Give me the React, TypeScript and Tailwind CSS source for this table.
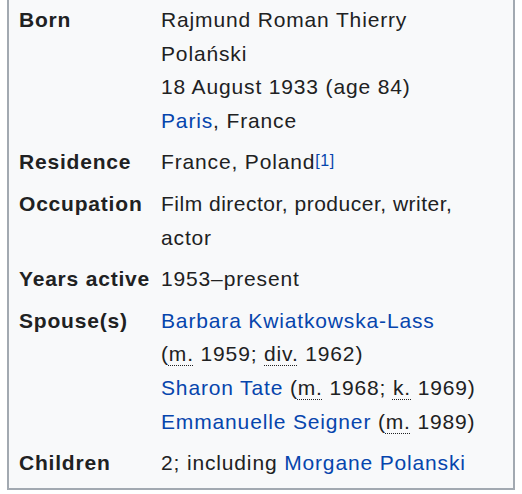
import React from "react";

const Link = ({ children }: { children: React.ReactNode }) => (
  <span className="text-[#0645ad]">{children}</span>
);

const Abbr = ({ children }: { children: React.ReactNode }) => (
  <span className="underline decoration-dotted decoration-[1px] underline-offset-[4px]">{children}</span>
);

const Row = ({ label, children }: { label: string; children: React.ReactNode }) => (
  <div className="grid grid-cols-[152px_1fr] py-1">
    <div className="pl-[10px] font-bold whitespace-nowrap tracking-[0.8px]">{label}</div>
    <div>{children}</div>
  </div>
);

export default function App() {
  return (
    <div className="w-[522px] h-[494px] bg-white overflow-hidden">
      <div
        className="ml-[7px] w-[508px] mt-[-1px] border-x-2 border-b-2 border-[#a2a9b1] bg-[#f8f9fa] pb-[4px] text-[#202122] text-[21px] leading-[33.6px] tracking-[0.85px]"
        style={{ fontFamily: '"Liberation Sans", Arial, sans-serif' }}
      >
        <Row label="Born">
          <div>Rajmund Roman Thierry</div>
          <div>Polański</div>
          <div>18 August 1933 (age 84)</div>
          <div>
            <Link>Paris</Link>, France
          </div>
        </Row>
        <Row label="Residence">
          <div>
            France, Poland
            <sup className="text-[16px] text-[#0645ad] relative top-[-3px] tracking-[0.5px]">[1]</sup>
          </div>
        </Row>
        <Row label="Occupation">
          <div className="tracking-[0.5px]">Film director, producer, writer,</div>
          <div>actor</div>
        </Row>
        <Row label="Years active">
          <div>1953–present</div>
        </Row>
        <Row label="Spouse(s)">
          <div>
            <Link>Barbara Kwiatkowska-Lass</Link>
          </div>
          <div>
            (<Abbr>m.</Abbr> 1959; <Abbr>div.</Abbr> 1962)
          </div>
          <div>
            <Link>Sharon Tate</Link> (<Abbr>m.</Abbr> 1968; <Abbr>k.</Abbr> 1969)
          </div>
          <div>
            <Link>Emmanuelle Seigner</Link> (<Abbr>m.</Abbr> 1989)
          </div>
        </Row>
        <Row label="Children">
          <div>
            2; including <Link>Morgane Polanski</Link>
          </div>
        </Row>
      </div>
    </div>
  );
}
